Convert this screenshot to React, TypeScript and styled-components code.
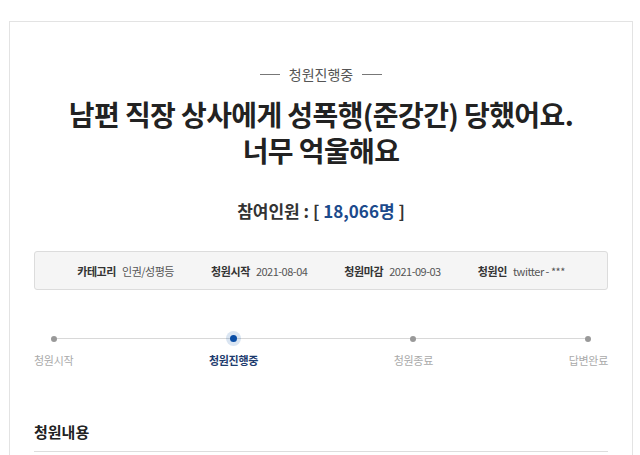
import React, { FC } from "react";
import styled, { createGlobalStyle } from "styled-components";

const GlobalStyle = createGlobalStyle`
  body {
    margin: 0;
    background: #fff;
    font-family: "Noto Sans CJK KR", "Noto Sans", sans-serif;
    color: #222;
  }
`;

const Page = styled.div`
  padding: 21px 7px 0 9px;
`;

const Card = styled.div`
  border: 1px solid #e3e3e3;
  border-bottom: none;
  padding: 42px 24px 0 24px;
  min-height: 440px;
`;

const Status = styled.div`
  display: flex;
  justify-content: center;
  align-items: center;
  gap: 9px;
  font-size: 14px;
  line-height: 20px;
  color: #555;
  &::before,
  &::after {
    content: "";
    width: 20px;
    height: 1px;
    background: #777;
  }
`;

const Title = styled.h1`
  margin: 12px 0 0;
  text-align: center;
  font-size: 28px;
  line-height: 36px;
  font-weight: 700;
  color: #222;
  letter-spacing: -0.6px;
`;

const Count = styled.div`
  margin-top: 30px;
  text-align: center;
  font-size: 17px;
  line-height: 26px;
  font-weight: 700;
  color: #333;
`;

const CountNum = styled.span`
  color: #1c4a8c;
`;

const InfoBox = styled.div`
  margin-top: 27px;
  height: 37px;
  border: 1px solid #dcdcdc;
  border-radius: 3px;
  background: #f5f5f5;
  display: flex;
  justify-content: center;
  align-items: center;
  gap: 37px;
  font-size: 11px;
`;

const InfoItem = styled.div`
  display: flex;
  gap: 6px;
  align-items: center;
`;

const InfoLabel = styled.span`
  font-weight: 700;
  color: #333;
  letter-spacing: -0.4px;
`;

const InfoValue = styled.span`
  color: #555;
  letter-spacing: -0.5px;
`;

const Progress = styled.div`
  position: relative;
  margin-top: 42px;
  display: flex;
  justify-content: space-between;
  &::before {
    content: "";
    position: absolute;
    left: 17px;
    right: 18px;
    top: 6px;
    height: 1px;
    background: #d8d8d8;
  }
`;

const Step = styled.div`
  display: flex;
  flex-direction: column;
  align-items: center;
  gap: 7px;
  position: relative;
`;

const DotWrap = styled.div`
  width: 13px;
  height: 13px;
  display: flex;
  align-items: center;
  justify-content: center;
`;

const Dot = styled.div<{ $active?: boolean }>`
  width: ${(p) => (p.$active ? 7 : 6)}px;
  height: ${(p) => (p.$active ? 7 : 6)}px;
  border-radius: 50%;
  background: ${(p) => (p.$active ? "#0a4ea6" : "#999")};
  box-shadow: ${(p) =>
    p.$active ? "0 0 0 4px rgba(10, 78, 166, 0.15)" : "none"};
`;

const StepLabel = styled.span<{ $active?: boolean }>`
  font-size: 11px;
  line-height: 16px;
  letter-spacing: -0.3px;
  color: ${(p) => (p.$active ? "#1d3b6e" : "#aaa")};
  font-weight: ${(p) => (p.$active ? 700 : 400)};
  white-space: nowrap;
`;

const SectionTitle = styled.h2`
  margin: 53px 0 0;
  padding-bottom: 8px;
  border-bottom: 1px solid #ddd;
  font-size: 15px;
  line-height: 22px;
  font-weight: 700;
  color: #222;
`;

const info = [
  { label: "카테고리", value: "인권/성평등" },
  { label: "청원시작", value: "2021-08-04" },
  { label: "청원마감", value: "2021-09-03" },
  { label: "청원인", value: "twitter - ***" },
];

const steps = ["청원시작", "청원진행중", "청원종료", "답변완료"];

const App: FC = () => {
  return (
    <Page>
      <GlobalStyle />
      <Card>
        <Status>청원진행중</Status>
        <Title>
          남편 직장 상사에게 성폭행(준강간) 당했어요.
          <br />
          너무 억울해요
        </Title>
        <Count>
          참여인원 : [ <CountNum>18,066명</CountNum> ]
        </Count>
        <InfoBox>
          {info.map((i) => (
            <InfoItem key={i.label}>
              <InfoLabel>{i.label}</InfoLabel>
              <InfoValue>{i.value}</InfoValue>
            </InfoItem>
          ))}
        </InfoBox>
        <Progress>
          {steps.map((s, idx) => (
            <Step key={s}>
              <DotWrap>
                <Dot $active={idx === 1} />
              </DotWrap>
              <StepLabel $active={idx === 1}>{s}</StepLabel>
            </Step>
          ))}
        </Progress>
        <SectionTitle>청원내용</SectionTitle>
      </Card>
    </Page>
  );
};

export default App;
